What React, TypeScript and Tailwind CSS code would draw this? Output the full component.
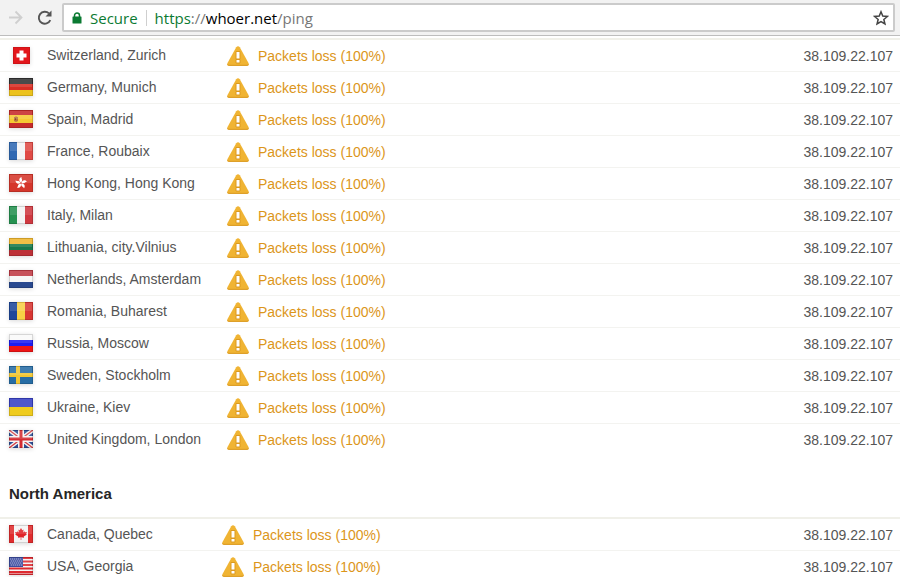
import type { ReactNode } from "react";

type Server = {
  name: string;
  flag: keyof typeof flags;
};

type Region = {
  title: string;
  showTitle: boolean;
  statusClass: string;
  servers: Server[];
};

const ip = "38.109.22.107";

const flags = {
  ch: (
    <>
      <rect x="4" y="1" width="17" height="17" fill="#e3161b" />
      <path d="M4.500 1.500h16v16h-16z" fill="none" stroke="#b90f14" strokeOpacity="0.5" />
      <path d="M10.500 4.500h4v3h3v4h-3v3h-4v-3h-3v-4h3z" fill="#fff" />
    </>
  ),
  de: <Stripes colors={["#333333", "#d92f25", "#ecc21c"]} />,
  es: (
    <>
      <rect width="24" height="18" fill="#c62a2b" />
      <rect y="5" width="24" height="8" fill="#f5c933" />
      <path d="M5 7h1l1-1 1 1h1v4l-2 1-2-1z" fill="#b5763c" />
      <path d="M6 8h1v2H6z" fill="#8d3f2c" />
    </>
  ),
  fr: <Stripes vertical colors={["#2f68b2", "#f4f4f4", "#e04a45"]} />,
  hk: (
    <>
      <rect width="24" height="18" fill="#d5362b" />
      {[0, 72, 144, 216, 288].map((angle) => (
        <path key={angle} d="M12 8.5C9.500 7 9.800 4 12.600 3C12 5 14.500 6 12 8.500z" fill="#fff" transform={`rotate(${angle} 12 9)`} />
      ))}
    </>
  ),
  it: <Stripes vertical colors={["#259150", "#f4f4f4", "#cf3840"]} />,
  lt: <Stripes colors={["#efb62d", "#18784c", "#bd3037"]} />,
  nl: <Stripes colors={["#c03b45", "#f6f6f6", "#29498f"]} />,
  ro: <Stripes vertical colors={["#1e479a", "#f7cf45", "#d83532"]} />,
  ru: <Stripes colors={["#fafafa", "#1d1df0", "#ee1414"]} />,
  se: (
    <>
      <rect width="24" height="18" fill="#276da5" />
      <path d="M7 0h4v7h13v4H11v7H7v-7H0V7h7z" fill="#f2c633" />
    </>
  ),
  ua: <Stripes colors={["#3740c4", "#efcb1d"]} />,
  gb: (
    <>
      <rect width="24" height="18" fill="#2c4c92" />
      <path d="M0 0l24 18M24 0L0 18" stroke="#f2f2f2" strokeWidth="4" />
      <path d="M0 0l24 18M24 0L0 18" stroke="#d33a40" strokeWidth="1.3" />
      <path d="M12 0v18M0 9h24" stroke="#f5f5f5" strokeWidth="6" />
      <path d="M12 0v18M0 9h24" stroke="#d42c32" strokeWidth="3" />
    </>
  ),
  ca: (
    <>
      <rect width="24" height="18" fill="#f4f4f4" />
      <path d="M0 0h5v18H0zM19 0h5v18h-5z" fill="#e02c2d" />
      <path
        d="M12 3l1.300 2.200 1.300-.6-.4 3 1.500-1.300.3 1 2-.2-.9 1.800.8.7-3.100 2 .2 1.100-2.700-.4V15h-.6v-2.700l-2.700.4.2-1.100-3.100-2 .8-.7L6 7.100l2 .2.3-1 1.500 1.300-.4-3 1.300.6z"
        fill="#e02328"
      />
    </>
  ),
  us: (
    <>
      <rect width="24" height="18" fill="#f3f3f3" />
      <path d="M0 1h24M0 4.500h24M0 8h24M0 11.500h24M0 15h24M0 17.500h24" stroke="#de2a30" strokeWidth="1.800" />
      <rect width="14" height="10" fill="#3c4ca0" />
      <path d="M1 2h12M2 4h11M1 6h12M2 8h11" stroke="#8f99cb" strokeWidth="1" strokeDasharray="1 1" />
    </>
  ),
};

const regions: Region[] = [
  {
    title: "Europe",
    showTitle: false,
    statusClass: "w-[227px]",
    servers: [
      { name: "Switzerland, Zurich", flag: "ch" },
      { name: "Germany, Munich", flag: "de" },
      { name: "Spain, Madrid", flag: "es" },
      { name: "France, Roubaix", flag: "fr" },
      { name: "Hong Kong, Hong Kong", flag: "hk" },
      { name: "Italy, Milan", flag: "it" },
      { name: "Lithuania, city.Vilnius", flag: "lt" },
      { name: "Netherlands, Amsterdam", flag: "nl" },
      { name: "Romania, Buharest", flag: "ro" },
      { name: "Russia, Moscow", flag: "ru" },
      { name: "Sweden, Stockholm", flag: "se" },
      { name: "Ukraine, Kiev", flag: "ua" },
      { name: "United Kingdom, London", flag: "gb" },
    ],
  },
  {
    title: "North America",
    showTitle: true,
    statusClass: "w-[222px]",
    servers: [
      { name: "Canada, Quebec", flag: "ca" },
      { name: "USA, Georgia", flag: "us" },
    ],
  },
];

export default function App() {
  return (
    <div className="bg-white font-['Liberation_Sans',Arial,sans-serif] text-[14px] text-[#555]">
      <Toolbar />
      <main className="pt-[2px]">
        {regions.map((region) => (
          <RegionTable key={region.title} region={region} />
        ))}
      </main>
    </div>
  );
}

function Toolbar() {
  return (
    <header className="flex h-[36px] items-center border-b border-[#bdbdbd] bg-[#f2f2f2] pr-[5px] pl-[8px]">
      <button type="button" aria-label="Forward" disabled className="text-[#cfcfcf]">
        <svg width="16" height="16" viewBox="0 0 16 16" fill="none" stroke="currentColor" strokeWidth="1.8" className="block">
          <path d="M1 7.500h12.500M7.500 1.500L13.500 7.500L7.500 13.500" />
        </svg>
      </button>
      <button type="button" aria-label="Reload" className="ml-[12px] text-[#555]">
        <svg width="18" height="18" viewBox="0 0 18 18" fill="none" className="block">
          <path d="M14.300 11.200A6 6 0 1 1 13 4.400" stroke="currentColor" strokeWidth="1.900" />
          <path d="M15.500 1.500V7.500H9.500z" fill="currentColor" />
        </svg>
      </button>
      <div className="ml-[8px] flex h-[29px] min-w-0 flex-1 items-center rounded-[2px] border-2 border-[#cbcbcb] bg-white pr-[4px] pl-[8px] font-['Open_Sans','Noto_Sans',sans-serif] text-[15px] leading-[20px]">
        <svg width="10" height="12" viewBox="0 0 10 12" className="block shrink-0 text-[#0b7a32]" aria-hidden="true">
          <path d="M2.500 5V3.500a2.500 2.500 0 0 1 5 0V5" fill="none" stroke="currentColor" strokeWidth="1.500" />
          <rect x="0.500" y="4.500" width="9" height="7" rx="0.500" fill="currentColor" />
        </svg>
        <span className="ml-[8px] text-[#0b7a32]">Secure</span>
        <span className="mx-[8px] h-[16px] w-px shrink-0 bg-[#cfcfcf]" />
        <a href="https://whoer.net/ping" className="min-w-0 flex-1 truncate text-[#777]">
          <span className="text-[#0b7a32]">https</span>://<span className="text-black">whoer.net</span>/ping
        </a>
        <button type="button" aria-label="Bookmark this page" className="shrink-0 text-[#444]">
          <svg width="16" height="16" viewBox="0 0 16 16" fill="none" stroke="currentColor" strokeWidth="1.500" className="block">
            <path d="M8 1.800l1.750 4.300 4.650.35-3.550 3 1.100 4.550L8 11.550 4.050 14l1.100-4.550-3.550-3 4.650-.35z" />
          </svg>
        </button>
      </div>
    </header>
  );
}

function RegionTable({ region }: { region: Region }) {
  return (
    <section aria-label={region.title}>
      {region.showTitle && (
        <h2 className="px-[9px] pt-[28px] pb-[13px] text-[15px] leading-[20px] font-bold text-[#262626]">{region.title}</h2>
      )}
      <table className="w-full table-fixed border-separate border-spacing-0 border-t-2 border-[#f0f0e9]">
        <tbody>
          {region.servers.map((server) => (
            <tr key={server.name} className="group h-[32px]">
              <td className={`border-b border-[#f3f3f0] p-0 pb-px pl-[9px] group-last:border-transparent ${region.statusClass}`}>
                <div className="flex items-center gap-[14px] whitespace-nowrap">
                  <Flag square={server.flag === "ch"}>{flags[server.flag]}</Flag>
                  {server.name}
                </div>
              </td>
              <td className="border-b border-[#f3f3f0] p-0 group-last:border-transparent">
                <div className="flex items-center gap-[9px] pt-px text-[#dc961a]">
                  <WarningIcon />
                  Packets loss (100%)
                </div>
              </td>
              <td className="w-[120px] border-b border-[#f3f3f0] p-0 pt-px pr-[7px] text-right group-last:border-transparent">{ip}</td>
            </tr>
          ))}
        </tbody>
      </table>
    </section>
  );
}

function Flag({ children, square }: { children: ReactNode; square: boolean }) {
  return (
    <svg width="24" height="18" viewBox="0 0 24 18" className="block shrink-0 drop-shadow-sm" aria-hidden="true">
      {children}
      {!square && (
        <>
          <rect x="1" y="1" width="22" height="8" fill="#fff" fillOpacity="0.12" />
          <rect x="0.5" y="0.5" width="23" height="17" fill="none" stroke="#000" strokeOpacity="0.14" />
        </>
      )}
    </svg>
  );
}

function Stripes({ colors, vertical = false }: { colors: string[]; vertical?: boolean }) {
  const size = (vertical ? 24 : 18) / colors.length;
  return (
    <>
      {colors.map((color, i) =>
        vertical ? (
          <rect key={color} x={i * size} width={size} height="18" fill={color} />
        ) : (
          <rect key={color} y={i * size} width="24" height={size} fill={color} />
        ),
      )}
    </>
  );
}

function WarningIcon() {
  return (
    <svg width="22" height="20" viewBox="0 0 22 20" className="block shrink-0" aria-hidden="true">
      <path d="M9.200 1.300Q11-.7 12.800 1.300L21.500 17Q22.400 20 19.500 20H2.500Q-.4 20 .5 17z" fill="#f0b433" />
      <path d="M.4 17.500Q0 20 2.500 20h17q2.500 0 2.100-2.500-.6 1.300-2.100 1.300h-17Q1 18.800.4 17.500z" fill="#dea02a" />
      <path d="M9 5.500h4v7.500H9zM9 13.500h4v3.500H9z" fill="#fff" stroke="#dc9a20" strokeWidth="1" />
    </svg>
  );
}
